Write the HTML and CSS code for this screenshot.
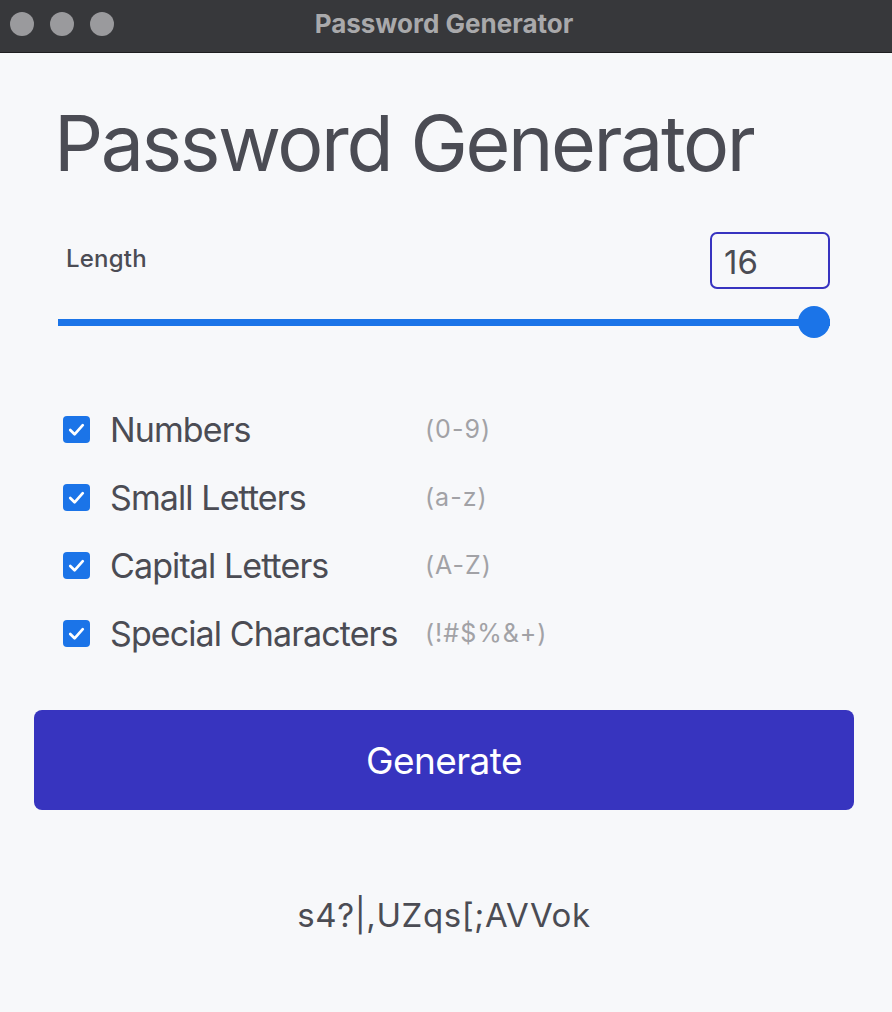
FILE: index.html
```html
<!DOCTYPE html>
<html>
<head>
<meta charset="utf-8">
<link rel="stylesheet" href="styles.css">
</head>
<body>
<div class="window">
  <div class="titlebar">
    <div class="lights"><span class="dot"></span><span class="dot"></span><span class="dot"></span></div>
    <div class="wtitle">Password Generator</div>
  </div>
  <main class="content">
    <h1 class="heading">Password Generator</h1>
    <div class="length-row">
      <label class="length-label">Length</label>
      <div class="num-input">16</div>
    </div>
    <div class="slider"><div class="track"></div><div class="thumb"></div></div>
    <ul class="options">
      <li class="opt"><span class="cb"><svg viewBox="0 0 28 28" width="27" height="27"><path d="M7.5 14.5 L12 19 L20.5 9.5" fill="none" stroke="#fff" stroke-width="2.8" stroke-linecap="round" stroke-linejoin="round"/></svg></span><span class="opt-name">Numbers</span><span class="opt-hint">(0-9)</span></li>
      <li class="opt"><span class="cb"><svg viewBox="0 0 28 28" width="27" height="27"><path d="M7.5 14.5 L12 19 L20.5 9.5" fill="none" stroke="#fff" stroke-width="2.8" stroke-linecap="round" stroke-linejoin="round"/></svg></span><span class="opt-name">Small Letters</span><span class="opt-hint">(a-z)</span></li>
      <li class="opt"><span class="cb"><svg viewBox="0 0 28 28" width="27" height="27"><path d="M7.5 14.5 L12 19 L20.5 9.5" fill="none" stroke="#fff" stroke-width="2.8" stroke-linecap="round" stroke-linejoin="round"/></svg></span><span class="opt-name">Capital Letters</span><span class="opt-hint">(A-Z)</span></li>
      <li class="opt"><span class="cb"><svg viewBox="0 0 28 28" width="27" height="27"><path d="M7.5 14.5 L12 19 L20.5 9.5" fill="none" stroke="#fff" stroke-width="2.8" stroke-linecap="round" stroke-linejoin="round"/></svg></span><span class="opt-name">Special Characters</span><span class="opt-hint">(!#$%&amp;+)</span></li>
    </ul>
    <button class="generate">Generate</button>
    <div class="password">s4?|,UZqs[;AVVok</div>
  </main>
</div>
</body>
</html>
```
FILE: styles.css
```css
* { box-sizing: border-box; }
html, body { margin: 0; padding: 0; }
body {
  width: 892px;
  height: 1012px;
  background: #f7f8fa;
  font-family: Inter, "Noto Sans", sans-serif;
  overflow: hidden;
}
.window { display: flex; flex-direction: column; height: 100%; }
.titlebar {
  height: 53px;
  background: #37383b;
  border-bottom: 1px solid #1e1e20;
  display: flex;
  align-items: center;
}
.lights { display: flex; gap: 16px; padding-left: 10px; padding-bottom: 4px; }
.dot { width: 24px; height: 24px; border-radius: 50%; background: #9a9a9d; display: block; }
.wtitle {
  flex: 1;
  text-align: center;
  color: #a9a9ab;
  font-weight: 700;
  font-size: 26px;
  margin-left: -118px;
  padding-bottom: 6px;
}
.content { padding: 0 38px 0 34px; }
.heading {
  margin: 52px 0 0 20px;
  font-size: 77px;
  font-weight: 400;
  line-height: 1;
  color: #4b4c54;
  letter-spacing: -2.4px;
}
.length-row {
  display: flex;
  justify-content: space-between;
  align-items: center;
  margin: 50px 24px 0 32px;
}
.length-label { font-size: 24px; color: #4b4c54; font-weight: 500; margin-top: -4px; letter-spacing: 0.2px; }
.num-input {
  width: 120px;
  height: 57px;
  border: 2px solid #3733c0;
  border-radius: 7px;
  font-size: 33px;
  color: #4b4c54;
  padding: 8px 0 0 12px;
}
.slider { position: relative; margin: 17px 24px 0 24px; height: 32px; display: flex; align-items: center; }
.track { height: 7px; background: #1b74e8; width: 100%; }
.thumb {
  position: absolute;
  right: 0;
  top: 0;
  width: 32px;
  height: 32px;
  border-radius: 50%;
  background: #1b74e8;
}
.options { list-style: none; margin: 70px 0 0 29px; padding: 0; display: flex; flex-direction: column; gap: 26px; }
.opt { display: flex; align-items: center; height: 42px; }
.cb { width: 27px; height: 27px; border-radius: 4px; background: #1b74e8; display: flex; flex-shrink: 0; }
.cb svg { display: block; }
.opt-name { font-size: 34px; color: #4b4c54; margin-left: 20px; width: 315px; letter-spacing: -0.9px; white-space: nowrap; }
.opt-hint { font-size: 25px; color: #a2a2a6; letter-spacing: 1px; white-space: nowrap; }
.generate {
  display: block;
  width: 820px;
  height: 100px;
  margin-top: 56px;
  background: #3734bf;
  border: none;
  border-radius: 8px;
  color: #fff;
  font-family: Inter, "Noto Sans", sans-serif;
  font-size: 37px;
  letter-spacing: -0.6px;
}
.password {
  text-align: center;
  width: 820px;
  margin-top: 85px;
  font-size: 33px;
  color: #4b4c54;
  letter-spacing: 0.6px;
}
```
